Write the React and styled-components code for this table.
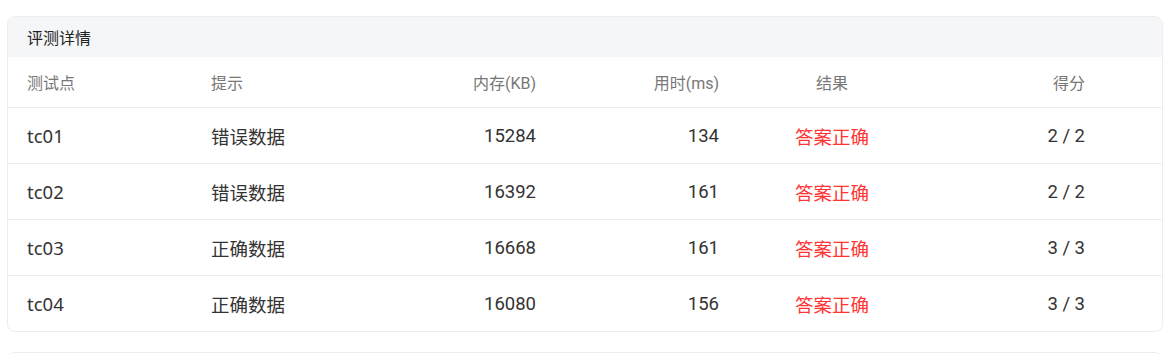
import * as React from 'react';
import styled, { createGlobalStyle } from 'styled-components';

const rows = [
  { id: 'tc01', hint: '错误数据', mem: 15284, time: 134, result: '答案正确', score: '2 / 2' },
  { id: 'tc02', hint: '错误数据', mem: 16392, time: 161, result: '答案正确', score: '2 / 2' },
  { id: 'tc03', hint: '正确数据', mem: 16668, time: 161, result: '答案正确', score: '3 / 3' },
  { id: 'tc04', hint: '正确数据', mem: 16080, time: 156, result: '答案正确', score: '3 / 3' },
];

const App = () => {
  return (
    <Page>
      <GlobalStyle />
      <Card>
        <CardHeader>评测详情</CardHeader>
        <HeadRow>
          <Cell>测试点</Cell>
          <Cell>提示</Cell>
          <Cell align="right">内存(KB)</Cell>
          <Cell align="right">用时(ms)</Cell>
          <Cell align="center">结果</Cell>
          <Cell align="right">得分</Cell>
        </HeadRow>
        {rows.map((r) => (
          <Row key={r.id}>
            <Cell latin>{r.id}</Cell>
            <Cell>{r.hint}</Cell>
            <Cell align="right">{r.mem}</Cell>
            <Cell align="right">{r.time}</Cell>
            <Cell align="center" accent>{r.result}</Cell>
            <Cell align="right">{r.score}</Cell>
          </Row>
        ))}
      </Card>
      <NextCard />
    </Page>
  );
};

export default App;

const GlobalStyle = createGlobalStyle`
  body {
    margin: 0;
    background: #fff;
    font-family: Roboto, "Noto Sans CJK SC", sans-serif;
  }
`;

const Page = styled.div`
  padding: 16px 0 0 7px;
  overflow: hidden;
  height: 354px;
  box-sizing: border-box;
`;

const Card = styled.div`
  width: 1156px;
  border: 1px solid #ebedf0;
  border-radius: 8px;
  overflow: hidden;
  box-sizing: border-box;
`;

const CardHeader = styled.div`
  height: 40px;
  background: #f5f6f8;
  padding: 0 19px;
  display: flex;
  align-items: center;
  font-size: 16px;
  font-weight: 400;
  color: #222;
`;

const columns = '184px 184px 181px 183px 186px 180px 1fr';

const HeadRow = styled.div`
  display: grid;
  grid-template-columns: ${columns};
  height: 50px;
  align-items: center;
  border-bottom: 1px solid #ebedf0;
  font-size: 16px;
  color: #777;
`;

const Row = styled.div`
  display: grid;
  grid-template-columns: ${columns};
  height: 55px;
  align-items: center;
  font-size: 18.5px;
  color: #333;

  & + & {
    border-top: 1px solid #ebedf0;
  }
`;

const Cell = styled.div`
  padding: 0 21px 0 19px;
  text-align: ${(p) => p.align || 'left'};
  color: ${(p) => (p.accent ? '#ff3434' : 'inherit')};
  font-family: ${(p) => (p.latin ? '"Noto Sans", "Noto Sans CJK SC", sans-serif' : 'inherit')};
  white-space: nowrap;
`;

const NextCard = styled.div`
  margin-top: 20px;
  width: 1156px;
  height: 40px;
  border: 1px solid #ebedf0;
  border-radius: 8px;
  box-sizing: border-box;
`;
